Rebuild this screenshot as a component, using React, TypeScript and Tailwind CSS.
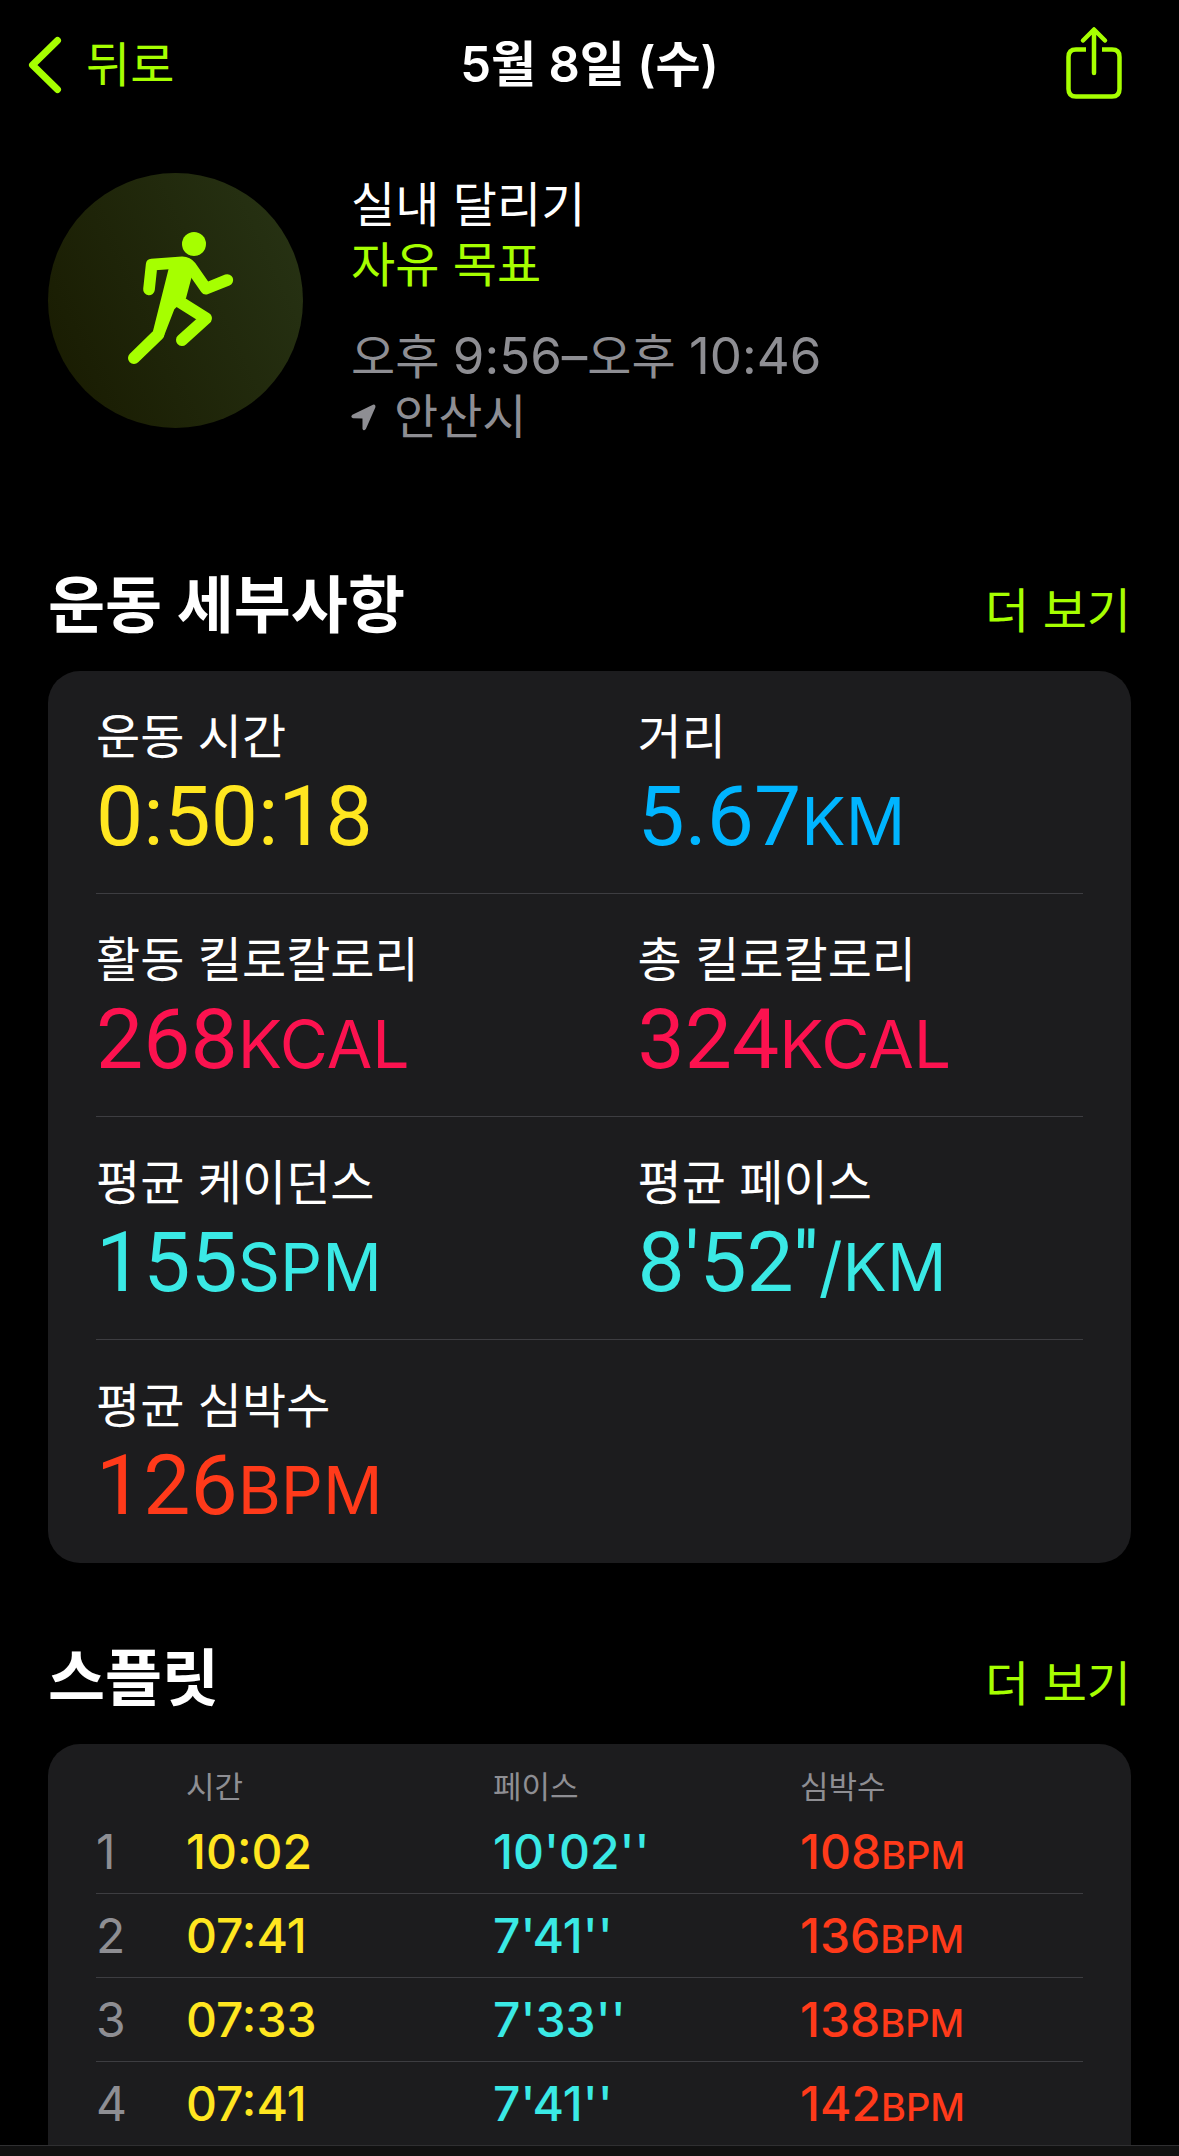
import React from "react";

const metrics = [
  { label: "운동 시간", value: "0:50:18", unit: "", color: "text-[#ffe620]" },
  { label: "거리", value: "5.67", unit: "KM", color: "text-[#00b5ff]" },
  { label: "활동 킬로칼로리", value: "268", unit: "KCAL", color: "text-[#fc124f]" },
  { label: "총 킬로칼로리", value: "324", unit: "KCAL", color: "text-[#fc124f]" },
  { label: "평균 케이던스", value: "155", unit: "SPM", color: "text-[#3ae9e5]" },
  { label: "평균 페이스", value: "8'52''", unit: "/KM", color: "text-[#3ae9e5]" },
  { label: "평균 심박수", value: "126", unit: "BPM", color: "text-[#ff3a1a]" },
];

const splits = [
  { time: "10:02", pace: "10'02''", bpm: 108 },
  { time: "07:41", pace: "7'41''", bpm: 136 },
  { time: "07:33", pace: "7'33''", bpm: 138 },
  { time: "07:41", pace: "7'41''", bpm: 142 },
];

function RunnerIcon() {
  return (
    <svg viewBox="54 69 765 765" className="size-full" fill="none" stroke="#a6ff00" strokeLinecap="round" strokeLinejoin="round" aria-hidden="true">
      <circle cx="492" cy="282" r="36" fill="#a6ff00" stroke="none" />
      <path d="M357 418 L365 344 L457 337 Q472 337 482 350 L528 416 L592 390" strokeWidth="35" />
      <path d="M417 352 L462 322 L490 362 L468 445 L433 478 L401 560 L369 543 Z" fill="#a6ff00" stroke="none" />
      <path d="M312 624 L385 553" strokeWidth="36" />
      <path d="M448 455 L528 505 L456 570" strokeWidth="36" />
    </svg>
  );
}

function Section({ title, children }: { title: string; children: React.ReactNode }) {
  return (
    <section>
      <div className="mb-[26px] flex items-baseline justify-between">
        <h2 className="text-[62px] leading-[78px] font-bold">{title}</h2>
        <a href="#" className="text-[48px] leading-[60px] text-[#a6ff00]">
          더 보기
        </a>
      </div>
      {children}
    </section>
  );
}

export default function App(): React.JSX.Element {
  return (
    <div className="flex min-h-screen flex-col bg-black font-['Inter','Noto_Sans_CJK_KR',sans-serif] text-white">
      <header className="grid h-[130px] grid-cols-[1fr_auto_1fr] items-center px-7">
        <button type="button" className="flex items-center gap-6 justify-self-start text-[48px] leading-[60px] text-[#a6ff00]">
          <svg viewBox="0 0 34 58" className="h-[58px] w-[34px]" fill="none" stroke="currentColor" strokeWidth="7" strokeLinecap="round" strokeLinejoin="round" aria-hidden="true">
            <path d="M29.5 4.5 L4.5 29 L29.5 53.5" />
          </svg>
          뒤로
        </button>
        <h1 className="text-[49px] leading-[60px] font-semibold">5월 8일 (수)</h1>
        <button type="button" aria-label="공유" className="mr-7 mb-1 justify-self-end text-[#a6ff00]">
          <svg viewBox="0 0 58 74" className="h-[74px] w-[58px]" fill="none" stroke="currentColor" strokeWidth="4.5" aria-hidden="true">
            <path d="M21 23.5 H11 Q3.5 23.5 3.5 31 V63 Q3.5 70.5 11 70.5 H47 Q54.5 70.5 54.5 63 V31 Q54.5 23.5 47 23.5 H37" />
            <path d="M29 47 V4 M18 14.5 L29 3.5 L40 14.5" strokeLinecap="round" strokeLinejoin="round" />
          </svg>
        </button>
      </header>

      <main className="flex flex-1 flex-col px-12 pt-[43px]">
        <div className="flex items-start gap-12">
          <div className="size-[255px] shrink-0 rounded-full bg-linear-[65deg] from-[#181a00] to-[#283415]">
            <RunnerIcon />
          </div>
          <div className="pt-0.5 text-[48px] leading-[60px]">
            <p>실내 달리기</p>
            <p className="text-[#a6ff00]">자유 목표</p>
            <div className="mt-8 text-[#8e8e93]">
              <p>
                오후 <span className="text-[51px] leading-none">9:56–</span>오후 <span className="text-[51px] leading-none">10:46</span>
              </p>
              <p className="flex items-center gap-[18px]">
                <svg viewBox="100 768 74 80" className="h-[27px] w-[25px]" fill="currentColor" aria-hidden="true">
                  <path d="M165 770 Q174 768 172 778 L144 842 Q137 850 134 841 L134 811 L106 810 Q97 807 104 800 Z" />
                </svg>
                안산시
              </p>
            </div>
          </div>
        </div>

        <div className="mt-[120px]">
          <Section title="운동 세부사항">
            <div className="grid grid-cols-2 rounded-[32px] bg-[#1c1c1e]">
              {metrics.map((m, i) => (
                <div key={m.label} className="flex flex-col">
                  <div className="px-12 pt-9 pb-7">
                    <p className="text-[48px] leading-[60px]">{m.label}</p>
                    <p className={`mt-0.5 font-['Roboto',sans-serif] text-[84px] leading-[96px] ${m.color}`}>
                      {m.value}
                      <span className="font-['Inter',sans-serif] text-[66px] leading-none">{m.unit}</span>
                    </p>
                  </div>
                  <div className={`h-px ${i < 6 ? "bg-[#3d3d41]" : ""} ${i % 2 === 0 ? "ml-12" : "mr-12"}`} />
                </div>
              ))}
            </div>
          </Section>
        </div>

        <div className="mt-[77px]">
          <Section title="스플릿">
            <div className="rounded-t-[32px] bg-[#1c1c1e] px-12">
              <table className="w-full table-fixed text-left">
                <thead>
                  <tr className="h-[65px] text-[31px] leading-[42px] text-[#8e8e93]">
                    <th className="w-[90px]" />
                    <th className="w-[307px] pt-5 font-normal">시간</th>
                    <th className="w-[307px] pt-5 font-normal">페이스</th>
                    <th className="pt-5 font-normal">심박수</th>
                  </tr>
                </thead>
                <tbody className="divide-y divide-[#3d3d41]">
                  {splits.map((s, i) => (
                    <tr key={i} className="h-[84px] text-[48px] leading-[60px] font-medium">
                      <td className="pt-0.5 font-normal text-[#8e8e93]">{i + 1}</td>
                      <td className="pt-0.5 text-[#ffe620]">{s.time}</td>
                      <td className="pt-0.5 text-[#3ae9e5]">{s.pace}</td>
                      <td className="pt-0.5 text-[#ff3a1a]">
                        {s.bpm}
                        <span className="text-[38px] leading-none">BPM</span>
                      </td>
                    </tr>
                  ))}
                </tbody>
              </table>
            </div>
          </Section>
        </div>
      </main>

      {/* top edge of the tab bar */}
      <nav className="sticky bottom-0 h-3 border-t border-[#2f2f31] bg-[#111111]" />
    </div>
  );
}
